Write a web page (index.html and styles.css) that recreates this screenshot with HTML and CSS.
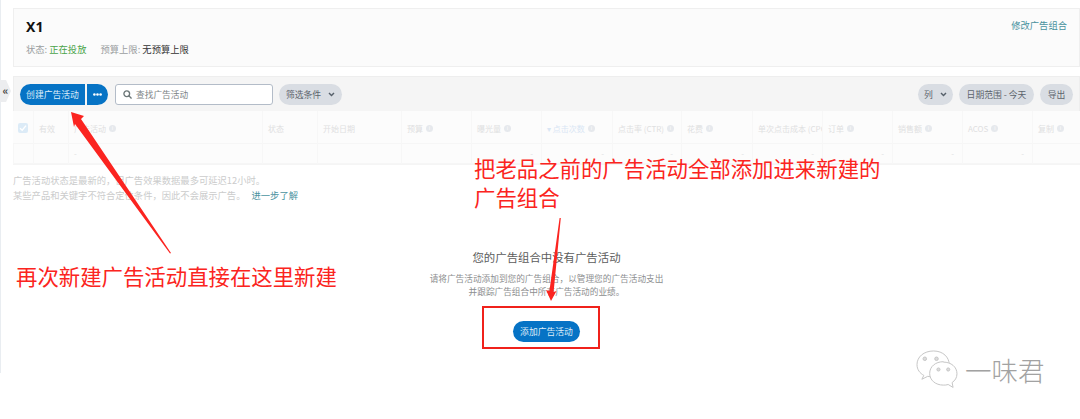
FILE: index.html
```html
<!DOCTYPE html>
<html lang="zh-CN">
<head>
<meta charset="utf-8">
<title>X1</title>
<link rel="stylesheet" href="styles.css">
</head>
<body>
<div class="frame">
  <div class="collapse">«</div>
  <section class="card">
    <div>
      <h1 class="title">X1</h1>
      <div class="meta">
        <span>状态: <b class="live">正在投放</b></span>
        <span>预算上限: <b class="cap">无预算上限</b></span>
      </div>
    </div>
    <a class="link">修改广告组合</a>
  </section>
  <section class="panel">
    <div class="toolbar">
      <div class="split">
        <button class="btn primary left">创建广告活动</button>
        <button class="btn primary right"><svg width="9" height="3" viewBox="0 0 9 3" fill="#fff"><circle cx="1.4" cy="1.5" r="1.3"/><circle cx="4.5" cy="1.5" r="1.3"/><circle cx="7.6" cy="1.5" r="1.3"/></svg></button>
      </div>
      <div class="search">
        <svg width="9" height="9" viewBox="0 0 12 12" fill="none" stroke="#6c7778" stroke-width="1.8"><circle cx="5" cy="5" r="3.8"/><path d="M7.8 7.8 11.4 11.4"/></svg>
        <span>查找广告活动</span>
      </div>
      <button class="btn pill filter">筛选条件<svg class="chev" width="7" height="5" viewBox="0 0 8 6" fill="none" stroke="#56606a" stroke-width="1.7"><path d="M1 1.2 4 4.2 7 1.2"/></svg></button>
      <div class="spacer"></div>
      <button class="btn pill cols">列<svg class="chev" width="7" height="5" viewBox="0 0 8 6" fill="none" stroke="#56606a" stroke-width="1.7"><path d="M1 1.2 4 4.2 7 1.2"/></svg></button>
      <button class="btn pill range">日期范围 - 今天</button>
      <button class="btn pill export">导出</button>
    </div>
    <div class="table">
      <div class="cell head"><span class="check"><svg width="8" height="8" viewBox="0 0 8 8" fill="none" stroke="#fff" stroke-width="1.4"><path d="M1 4.2 3.2 6.3 7 1.6"/></svg></span></div>
      <div class="cell head">有效</div>
      <div class="cell head">广告活动<i class="info">i</i></div>
      <div class="cell head">状态</div>
      <div class="cell head">开始日期</div>
      <div class="cell head">预算<i class="info">i</i></div>
      <div class="cell head">曝光量<i class="info">i</i></div>
      <div class="cell head sorted">▾ 点击次数<i class="info">i</i></div>
      <div class="cell head">点击率 (CTR)<i class="info">i</i></div>
      <div class="cell head">花费<i class="info">i</i></div>
      <div class="cell head clip">单次点击成本 (CPC)</div>
      <div class="cell head">订单<i class="info">i</i></div>
      <div class="cell head">销售额<i class="info">i</i></div>
      <div class="cell head">ACOS<i class="info">i</i></div>
      <div class="cell head">复制<i class="info">i</i></div>
      <div class="cell"></div>
      <div class="cell"></div>
      <div class="cell">-</div>
      <div class="cell"></div>
      <div class="cell"></div>
      <div class="cell"></div>
      <div class="cell end">-</div>
      <div class="cell end">-</div>
      <div class="cell end">-</div>
      <div class="cell end">-</div>
      <div class="cell end">-</div>
      <div class="cell end">-</div>
      <div class="cell end">-</div>
      <div class="cell end">-</div>
      <div class="cell"></div>
    </div>
  </section>
  <p class="note">广告活动状态是最新的，但广告效果数据最多可延迟12小时。<br>某些产品和关键字不符合定位条件，因此不会展示广告。 <a class="more">进一步了解</a></p>
  <section class="empty">
    <h2>您的广告组合中没有广告活动</h2>
    <p>请将广告活动添加到您的广告组合，以管理您的广告活动支出<br>并跟踪广告组合中所有广告活动的业绩。</p>
    <button class="btn primary add">添加广告活动</button>
  </section>
</div>

<svg class="arrows" width="1080" height="419" viewBox="0 0 1080 419" fill="#fb2420">
  <polygon points="71,112 84,116 81,119 171,253 170,253.5 75,124 74,127"/>
  <polygon points="560.8,218 553.6,292 556.5,291 551,301 546,290 549.4,291 559.6,218"/>
</svg>
<div class="mark"></div>
<div class="note-red one">把老品之前的广告活动全部添加进来新建的<br>广告组合</div>
<div class="note-red two">再次新建广告活动直接在这里新建</div>
<div class="wm">
  <svg width="45" height="39" viewBox="0 0 46 40" fill="#fff" stroke="#c4c4c4" stroke-width="1">
    <path d="M20 1C10 1 3 7 3 15c0 5 3 9 7 11l-2 4 6-3c2 .5 4 .7 6 .7 10 0 16-6 16-13S30 1 20 1Z"/>
    <path d="M30 12c-8 0-14 5-14 12s6 12 14 12c2 0 3 0 5-.6l5 3-1-5c3-2 5-5 5-9 0-7-6-12-14-12Z"/>
    <circle cx="11" cy="9" r="1.8" fill="#ddd"/><circle cx="23" cy="9" r="1.8" fill="#ddd"/>
    <circle cx="25" cy="20" r="1.6" fill="#ddd"/><circle cx="35" cy="20" r="1.6" fill="#ddd"/>
  </svg>
  <span>一味君</span>
</div>
</body>
</html>
```
FILE: styles.css
```css
* { box-sizing: border-box; }
html, body { margin: 0; height: 419px; overflow: hidden; background: #fff; }
body { font-family: "Noto Sans CJK SC", "Noto Sans", sans-serif; color: #333; }
.frame { position: relative; height: 373px; padding: 8px 0 0 12px; border-left: 1px solid #e9edf1; }
.collapse { position: absolute; left: -1px; top: 80px; width: 11px; height: 22px; background: #ecedef; font-size: 11px; font-weight: 700; line-height: 21px; text-align: center; color: #444; clip-path: polygon(0 0, 55% 0, 100% 50%, 55% 100%, 0 100%); }
.card { display: flex; justify-content: space-between; height: 59px; padding: 9px 12px 0; background: #fbfbfb; border: 1px solid #efefef; }
.title { margin: 0; font: 700 14px/18px "Noto Sans", sans-serif; color: #111; }
.meta { display: flex; gap: 14px; margin-top: 6px; font-size: 9.3px; line-height: 14px; color: #9a9e9f; }
.meta b { font-weight: 400; }
.live { color: #4aa44a; }
.cap { color: #333; }
.link { font-size: 9.3px; line-height: 12px; color: #4a929e; margin-top: 1px; }
.panel { margin-top: 9px; }
.toolbar { display: flex; align-items: center; gap: 6px; height: 35px; padding: 0 6px; background: #f5f5f5; border: 1px solid #eee; border-bottom: 0; }
.btn { display: inline-flex; align-items: center; justify-content: center; height: 21px; padding: 0; border: 0; border-radius: 11px; font: 8.8px/21px "Noto Sans CJK SC", sans-serif; white-space: nowrap; }
.primary { background: #0673c5; color: #dfeef9; }
.split { display: flex; gap: 2px; margin-right: 1px; }
.left { width: 65px; border-radius: 11px 0 0 11px; }
.right { width: 21px; border-radius: 0 11px 11px 0; }
.search { display: flex; align-items: center; gap: 4px; width: 158px; height: 21px; padding: 0 7px; background: #fff; border: 1px solid #b3bcc8; border-radius: 3px; font-size: 8.7px; color: #7c8385; }
.pill { background: #d9dde3; color: #5c646c; }
.filter { width: 63px; }
.cols { width: 35px; }
.range { width: 75px; }
.export { width: 33px; }
.chev { margin-left: 7px; }
.spacer { flex: 1; }
.table { display: grid; grid-template-columns: 20px 35px 194px 55px 84px 70px 70px 71px 69px 71px 70px 70px 70px 70px 1fr; grid-template-rows: 33px 20px; background: #fcfcfc; color: #dfe0e1; font-size: 8px; border-bottom: 1px solid #f5f5f5; }
.cell { display: flex; align-items: center; padding: 0 5px; border-left: 1px solid #f7f7f7; border-bottom: 1px solid #f6f6f6; overflow: hidden; white-space: nowrap; }
.cell:first-child { border-left: 0; }
.head { padding-top: 2px; }
.sorted { color: #d9e6f4; }
.clip { padding-right: 0; }
.end { justify-content: flex-end; padding-right: 8px; }
.check { display: flex; align-items: center; justify-content: center; width: 10px; height: 10px; background: #dcebf7; border-radius: 2px; flex: none; }
.info { display: inline-flex; align-items: center; justify-content: center; width: 7px; height: 7px; margin-left: 3px; background: #e6e9ed; border-radius: 50%; color: #fff; font: normal 5px/7px "Noto Sans", sans-serif; flex: none; }
.note { margin: 8px 0 0; font-size: 9.3px; line-height: 14.5px; color: #cbcccc; }
.more { color: #4a929e; margin-left: 4px; }
.empty { margin-top: 48px; text-align: center; }
.empty h2 { margin: 0; font-size: 11.4px; font-weight: 400; line-height: 14px; color: #5c5c5c; }
.empty p { margin: 8px 0 18px; font-size: 8.67px; line-height: 13px; color: #8c8e8f; }
.add { width: 67px; height: 21px; }
.arrows { position: absolute; left: 0; top: 0; pointer-events: none; }
.mark { position: absolute; left: 482px; top: 306px; width: 118px; height: 43px; border: 2px solid #f0211b; }
.note-red { position: absolute; color: #fb2420; font-size: 21.4px; line-height: 28.5px; white-space: nowrap; }
.one { left: 474px; top: 154px; }
.two { left: 16px; top: 262px; }
.wm { position: absolute; left: 914px; top: 350px; display: flex; align-items: center; gap: 6px; color: #a2a2a2; font-size: 26.5px; line-height: 39px; font-weight: 300; }
```
